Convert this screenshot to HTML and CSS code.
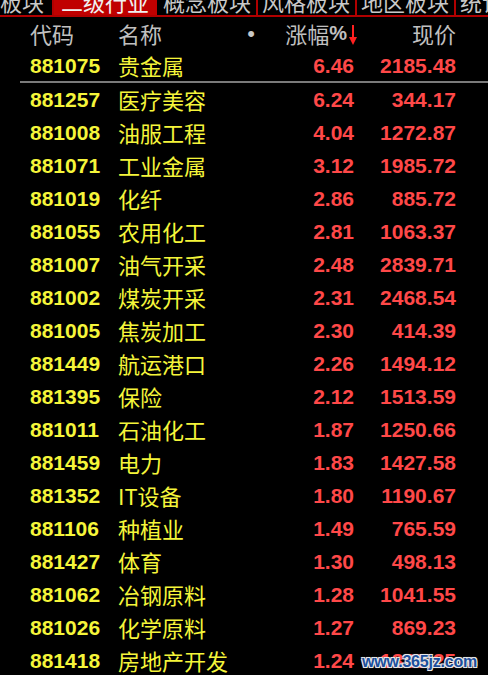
FILE: index.html
```html
<!DOCTYPE html>
<html lang="zh-CN">
<head>
<meta charset="utf-8">
<title>二级行业</title>
<link rel="stylesheet" href="styles.css">
</head>
<body>
<div class="screen">
  <div class="tabs">
    <div class="tab first">板块</div>
    <div class="tab active">二级行业</div>
    <div class="tab">概念板块</div>
    <div class="tab">风格板块</div>
    <div class="tab">地区板块</div>
    <div class="tab">统计</div>
  </div>
  <div class="row head">
    <div class="c-code">代码</div>
    <div class="c-name">名称<span class="dot">•</span></div>
    <div class="c-chg">涨幅<b class="pct">%</b><svg class="arrow" width="10" height="24" viewBox="0 0 10 24"><path d="M5 2 V20" stroke="#ff2020" stroke-width="2"/><path d="M1 14 L5 22 L9 14 Z" fill="#ff2020"/></svg></div>
    <div class="c-price">现价</div>
  </div>
  <div class="row first-row"><div class="c-code">881075</div><div class="c-name">贵金属</div><div class="c-chg">6.46</div><div class="c-price">2185.48</div></div>
  <div class="row"><div class="c-code">881257</div><div class="c-name">医疗美容</div><div class="c-chg">6.24</div><div class="c-price">344.17</div></div>
  <div class="row"><div class="c-code">881008</div><div class="c-name">油服工程</div><div class="c-chg">4.04</div><div class="c-price">1272.87</div></div>
  <div class="row"><div class="c-code">881071</div><div class="c-name">工业金属</div><div class="c-chg">3.12</div><div class="c-price">1985.72</div></div>
  <div class="row"><div class="c-code">881019</div><div class="c-name">化纤</div><div class="c-chg">2.86</div><div class="c-price">885.72</div></div>
  <div class="row"><div class="c-code">881055</div><div class="c-name">农用化工</div><div class="c-chg">2.81</div><div class="c-price">1063.37</div></div>
  <div class="row"><div class="c-code">881007</div><div class="c-name">油气开采</div><div class="c-chg">2.48</div><div class="c-price">2839.71</div></div>
  <div class="row"><div class="c-code">881002</div><div class="c-name">煤炭开采</div><div class="c-chg">2.31</div><div class="c-price">2468.54</div></div>
  <div class="row"><div class="c-code">881005</div><div class="c-name">焦炭加工</div><div class="c-chg">2.30</div><div class="c-price">414.39</div></div>
  <div class="row"><div class="c-code">881449</div><div class="c-name">航运港口</div><div class="c-chg">2.26</div><div class="c-price">1494.12</div></div>
  <div class="row"><div class="c-code">881395</div><div class="c-name">保险</div><div class="c-chg">2.12</div><div class="c-price">1513.59</div></div>
  <div class="row"><div class="c-code">881011</div><div class="c-name">石油化工</div><div class="c-chg">1.87</div><div class="c-price">1250.66</div></div>
  <div class="row"><div class="c-code">881459</div><div class="c-name">电力</div><div class="c-chg">1.83</div><div class="c-price">1427.58</div></div>
  <div class="row"><div class="c-code">881352</div><div class="c-name">IT设备</div><div class="c-chg">1.80</div><div class="c-price">1190.67</div></div>
  <div class="row"><div class="c-code">881106</div><div class="c-name">种植业</div><div class="c-chg">1.49</div><div class="c-price">765.59</div></div>
  <div class="row"><div class="c-code">881427</div><div class="c-name">体育</div><div class="c-chg">1.30</div><div class="c-price">498.13</div></div>
  <div class="row"><div class="c-code">881062</div><div class="c-name">冶钢原料</div><div class="c-chg">1.28</div><div class="c-price">1041.55</div></div>
  <div class="row"><div class="c-code">881026</div><div class="c-name">化学原料</div><div class="c-chg">1.27</div><div class="c-price">869.23</div></div>
  <div class="row"><div class="c-code">881418</div><div class="c-name">房地产开发</div><div class="c-chg">1.24</div><div class="c-price">1330.25</div></div>
  <div class="watermark">www.365jz.com</div>
</div>
</body>
</html>
```
FILE: styles.css
```css
html, body {
  margin: 0;
  padding: 0;
  background: #000;
}
.screen {
  position: relative;
  width: 488px;
  height: 675px;
  overflow: hidden;
  background: #000;
  font-family: "Liberation Sans", "Noto Sans CJK SC", sans-serif;
}
.tabs {
  display: flex;
  height: 15px;
  border-bottom: 2px solid #b00000;
  overflow: hidden;
  font-family: "Noto Sans CJK SC", sans-serif;
  font-size: 22px;
  color: #c8c8c8;
}
.tab {
  flex: none;
  padding: 0 5px 0 4px;
  line-height: 22px;
  margin-top: -10px;
  height: 25px;
  border-right: 2px solid #b00000;
  white-space: nowrap;
}
.tab.first {
  margin-left: -4px;
  padding-right: 8px;
}
.tab.active {
  background: #c00000;
  color: #f0f0f0;
  border-right-color: #000;
  padding: 0 8px 0 7px;
}
.row {
  display: grid;
  grid-template-columns: 88px 150px 86px 102px;
  padding-left: 30px;
  height: 33px;
  line-height: 33px;
  white-space: nowrap;
}
.row.head {
  color: #c0c0c0;
  font-family: "Noto Sans CJK SC", sans-serif;
  font-size: 22px;
  height: 33px;
  line-height: 33px;
}
.row.first-row {
  height: 31px;
  line-height: 31px;
  border-bottom: 2px solid #7a7a7a;
  margin-left: 20px;
  padding-left: 10px;
}
.c-code {
  color: #f5f53a;
  font-weight: bold;
  font-size: 21px;
}
.c-name {
  color: #f5f53a;
  font-family: "Noto Sans CJK SC", sans-serif;
  font-size: 22px;
  display: flex;
}
.c-chg, .c-price {
  color: #ff4848;
  font-weight: bold;
  font-size: 21px;
  text-align: right;
}
.head .c-code, .head .c-name, .head .c-chg, .head .c-price {
  color: #c0c0c0;
  font-weight: normal;
  font-size: 22px;
}
.head .c-chg {
  display: flex;
  justify-content: flex-end;
  align-items: center;
  margin-right: -4px;
}
.pct {
  font-family: "Liberation Sans", sans-serif;
  font-weight: bold;
  font-size: 20px;
}
.arrow {
  margin-left: 1px;
  margin-top: 2px;
}
.dot {
  margin-left: auto;
  margin-right: 13px;
  font-family: "Liberation Sans", sans-serif;
  font-size: 22px;
  color: #c8c8c8;
}
.watermark {
  position: absolute;
  left: 362px;
  top: 651px;
  font-family: "Liberation Sans", sans-serif;
  font-weight: bold;
  font-size: 16px;
  line-height: 22px;
  color: #1c4f9c;
  text-shadow: -1px -1px 0 #e8e8e8, 1px -1px 0 #e8e8e8, -1px 1px 0 #e8e8e8, 1px 1px 0 #e8e8e8, 0 0 2px #fff;
  letter-spacing: -0.2px;
}
```
